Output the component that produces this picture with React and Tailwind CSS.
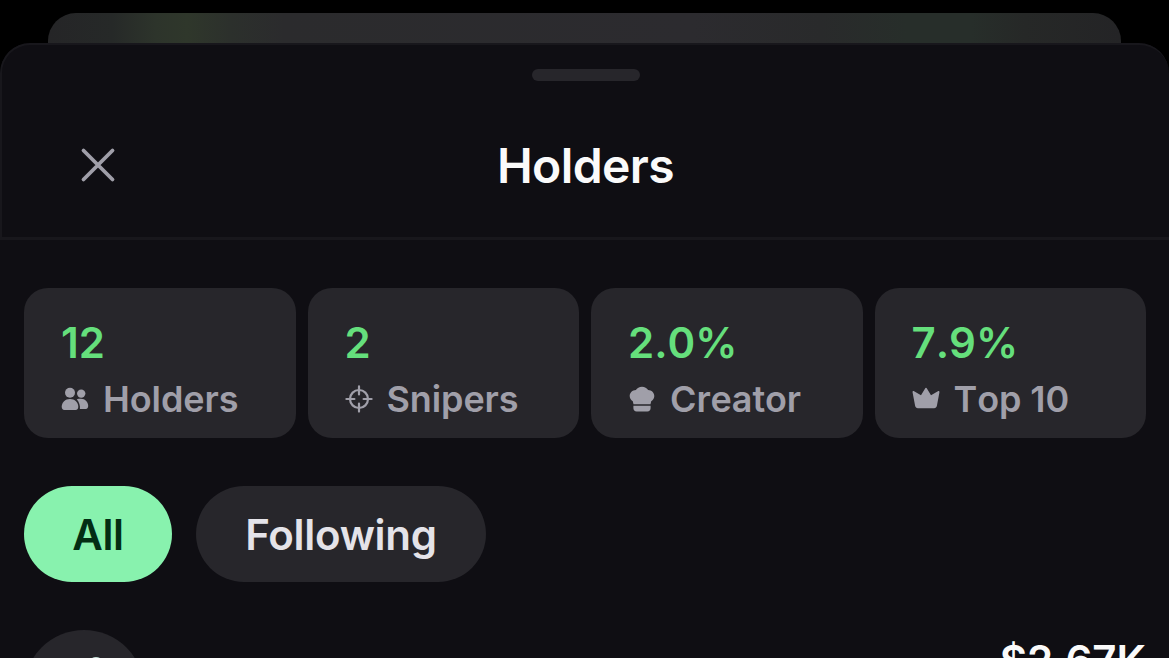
import React, { useState } from "react";

const HoldersIcon = () => (
  <svg viewBox="0 0 28 28" className="size-7" fill="currentColor">
    <circle cx="9" cy="7.800" r="5" />
    <circle cx="20.200" cy="8.600" r="4.200" />
    <path d="M9 14c4.800 0 8.300 3.400 8.300 7.800 0 2-.900 3.200-2.700 3.200H3.400C1.600 25 .700 23.800.700 21.800.700 17.400 4.200 14 9 14z" />
    <path d="M15.800 14.300c1.200-.500 2.700-.600 4.100-.600 4.300 0 7.300 3.300 7.300 7.100 0 1.900-.800 3.200-2.400 3.200h-5.900c.400-3.300-.700-6.800-3.100-9.700z" />
  </svg>
);

const SnipersIcon = () => (
  <svg
    viewBox="0 0 28 28"
    className="size-7"
    fill="none"
    stroke="currentColor"
    strokeWidth="2.200"
    strokeLinecap="round"
  >
    <circle cx="14" cy="14" r="9" />
    <path d="M14 1.400v8M14 18.600v8M1.400 14h8M18.600 14h8" />
  </svg>
);

const CreatorIcon = () => (
  <svg viewBox="0 0 28 28" className="size-7" fill="currentColor">
    <path d="M14 1.700c2.700 0 4.900 1.300 6.100 3.300 3.500.100 6.200 2.700 6.200 6.100 0 2.200-1.200 4-3.100 5.100l-.700 3H5.500l-.700-3c-1.900-1.100-3.100-2.900-3.100-5.100C1.700 7.700 4.400 5.100 7.900 5 9.100 3 11.300 1.700 14 1.700z" />
    <path d="M5.400 20.800h17.200v2.400c0 1.900-1.300 3.300-3.200 3.300H8.600c-1.900 0-3.200-1.400-3.200-3.300z" />
  </svg>
);

const CrownIcon = () => (
  <svg viewBox="0 0 28 28" className="size-7" fill="currentColor">
    <path d="M14 2.800c.400 0 .700.200.900.600l4.100 6.800 6.900-3.900c.900-.500 1.700.100 1.500 1.100l-2.500 13.400c-.300 1.600-1.300 2.400-2.800 2.400H5.900c-1.500 0-2.500-.800-2.800-2.400L.600 7.400C.400 6.400 1.200 5.800 2.100 6.300L9 10.200l4.100-6.800c.200-.400.500-.600.900-.600z" />
  </svg>
);

const stats = [
  { value: "12", label: "Holders", icon: <HoldersIcon /> },
  { value: "2", label: "Snipers", icon: <SnipersIcon /> },
  { value: "2.0%", label: "Creator", icon: <CreatorIcon /> },
  { value: "7.9%", label: "Top 10", icon: <CrownIcon /> },
];

function StatCard({ value, label, icon }) {
  return (
    <div className="h-[150px] rounded-3xl bg-[#27262b] pl-[37px] pt-[30px] [font-kerning:none]">
      <div className="text-[42px] leading-[50px] font-semibold text-[#65df7c]">
        {value}
      </div>
      <div className="mt-[7px] flex items-center gap-[14px] text-[#a09fa9]">
        {icon}
        <span className="text-[36px] leading-[48px] font-semibold tracking-[-0.1px] whitespace-nowrap">
          {label}
        </span>
      </div>
    </div>
  );
}

function Tab({ label, active, onClick }) {
  return (
    <button
      onClick={onClick}
      className={`h-24 shrink-0 rounded-full text-[42px] font-semibold tracking-[-0.3px] cursor-pointer ${
        active
          ? "w-[148px] bg-[#88f2ae] text-[#032e14]"
          : "w-[290px] bg-[#27262b] text-[#e4e3e9]"
      }`}
    >
      {label}
    </button>
  );
}

function App() {
  const [tab, setTab] = useState("All");

  return (
    <div className="flex h-[658px] w-[1169px] flex-col overflow-hidden bg-black pt-[13px] font-['Inter',sans-serif]">
      {/* sheet stacked behind */}
      <div className="mx-12 h-[30px] shrink-0 rounded-t-[28px] bg-[linear-gradient(90deg,#252527_0%,#262928_6%,#2d342b_10%,#2f372b_13%,#2c302c_17%,#2b2b2d_22%,#2c2b2f_60%,#292a2b_72%,#272e2a_80%,#272e2a_86%,#262827_91%,#242426_100%)]" />

      <div className="flex flex-1 flex-col overflow-hidden rounded-t-[30px] bg-[#0f0e13]">
        <header className="flex h-[197px] shrink-0 flex-col rounded-t-[30px] border-t-2 border-b-3 border-l-2 border-[#18171c] pt-6">
          <div className="ml-[530px] h-3 w-[108px] rounded-full bg-[#27262b]" />
          <div className="mt-[48px] grid grid-cols-[1fr_auto_1fr] items-center pl-[77px] pr-[77px]">
            <button aria-label="Close" className="ml-px cursor-pointer text-[#a09fa9]">
              <svg
                viewBox="0 0 36 36"
                className="size-9"
                fill="none"
                stroke="currentColor"
                strokeWidth="3.800"
                strokeLinecap="round"
              >
                <path d="M3.500 3.500l29 29M32.500 3.500l-29 29" />
              </svg>
            </button>
            <h1 className="pt-[2px] text-[48px] leading-[70px] font-semibold tracking-[-0.600px] text-[#fafafa]">
              Holders
            </h1>
          </div>
        </header>

        <section className="mt-12 grid grid-cols-4 gap-3 pl-6 pr-[23px]">
          {stats.map((s) => (
            <StatCard key={s.label} {...s} />
          ))}
        </section>

        <nav className="mt-12 flex gap-6 px-6">
          {["All", "Following"].map((t) => (
            <Tab
              key={t}
              label={t}
              active={tab === t}
              onClick={() => setTab(t)}
            />
          ))}
        </nav>

        <div className="mt-12 flex shrink-0 items-start justify-between pl-6 pr-[23px]">
          <div className="flex size-[120px] justify-center rounded-full bg-[#27262b] pt-[27px]">
            <div className="ml-6 size-4 rounded-full bg-[#c5e0d8]" />
          </div>
          <span className="pt-px text-[42px] leading-[60px] font-semibold text-[#fafafa]">
            $2.67K
          </span>
        </div>
      </div>
    </div>
  );
}

export default App;
